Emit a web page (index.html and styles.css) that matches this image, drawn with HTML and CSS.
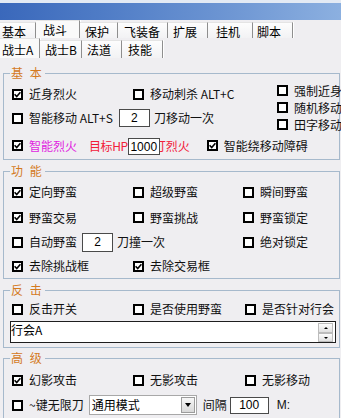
FILE: index.html
```html
<!DOCTYPE html>
<html lang="zh-CN">
<head>
<meta charset="utf-8">
<title>战斗</title>
<link rel="stylesheet" href="styles.css">
</head>
<body>
<div class="titlebar"></div>
<div class="tabs tabs1">
  <span class="tab w36 p2">基本</span>
  <span class="tab sel w44 p7">战斗</span>
  <span class="tab w38 p5">保护</span>
  <span class="tab w50 p6">飞装备</span>
  <span class="tab w40 p5">扩展</span>
  <span class="tab w45 p8">挂机</span>
  <span class="tab w40 p4">脚本</span>
</div>
<div class="tabs tabs2">
  <span class="tab sel w40 p2">战士A</span>
  <span class="tab w42 p5">战士B</span>
  <span class="tab w40 p5">法道</span>
  <span class="tab w41 p6">技能</span>
</div>
<div class="panel">
  <fieldset class="grp g1">
    <legend>基 本</legend>
    <div class="g1top">
      <div class="g1left">
        <div class="row h24">
          <span class="it c1"><i class="cb"><svg width="7" height="7" viewBox="0 0 7 7"><path d="M0.6 3.3 L2.7 5.5 L6.4 1.2"/></svg></i>近身烈火</span>
          <span class="it"><i class="cb"></i>移动刺杀 ALT+C</span>
        </div>
        <div class="row h24">
          <span class="it"><i class="cb"></i>智能移动 ALT+S</span>
          <span class="num n2a">2</span>
          <span class="tx">刀移动一次</span>
        </div>
      </div>
      <div class="g1right">
        <span class="it h17"><i class="cb"></i>强制近身</span>
        <span class="it h17"><i class="cb"></i>随机移动</span>
        <span class="it h17"><i class="cb"></i>田字移动</span>
      </div>
    </div>
    <div class="row h25">
      <span class="it"><i class="cb"><svg width="7" height="7" viewBox="0 0 7 7"><path d="M0.6 3.3 L2.7 5.5 L6.4 1.2"/></svg></i><span class="mag">智能烈火</span></span>
      <span class="red hp">目标HP</span>
      <span class="num n1000">1000</span>
      <span class="red clip"><span>打</span></span><span class="red tx">烈火</span>
      <span class="it ml17"><i class="cb"><svg width="7" height="7" viewBox="0 0 7 7"><path d="M0.6 3.3 L2.7 5.5 L6.4 1.2"/></svg></i>智能绕移动障碍</span>
    </div>
  </fieldset>

  <fieldset class="grp g2">
    <legend>功 能</legend>
    <div class="row h26">
      <span class="it c1"><i class="cb"><svg width="7" height="7" viewBox="0 0 7 7"><path d="M0.6 3.3 L2.7 5.5 L6.4 1.2"/></svg></i>定向野蛮</span>
      <span class="it c2a"><i class="cb"></i>超级野蛮</span>
      <span class="it"><i class="cb"></i>瞬间野蛮</span>
    </div>
    <div class="row h25">
      <span class="it c1"><i class="cb"><svg width="7" height="7" viewBox="0 0 7 7"><path d="M0.6 3.3 L2.7 5.5 L6.4 1.2"/></svg></i>野蛮交易</span>
      <span class="it c2a"><i class="cb"></i>野蛮挑战</span>
      <span class="it"><i class="cb"></i>野蛮锁定</span>
    </div>
    <div class="row h24">
      <span class="it c12">
        <span class="it"><i class="cb"></i>自动野蛮</span>
        <span class="num n2b">2</span>
        <span class="tx">刀撞一次</span>
      </span>
      <span class="it"><i class="cb"></i>绝对锁定</span>
    </div>
    <div class="row h24">
      <span class="it c1"><i class="cb"><svg width="7" height="7" viewBox="0 0 7 7"><path d="M0.6 3.3 L2.7 5.5 L6.4 1.2"/></svg></i>去除挑战框</span>
      <span class="it"><i class="cb"><svg width="7" height="7" viewBox="0 0 7 7"><path d="M0.6 3.3 L2.7 5.5 L6.4 1.2"/></svg></i>去除交易框</span>
    </div>
  </fieldset>

  <fieldset class="grp g3">
    <legend>反 击</legend>
    <div class="row h22">
      <span class="it c1"><i class="cb"></i>反击开关</span>
      <span class="it c2b"><i class="cb"></i>是否使用野蛮</span>
      <span class="it"><i class="cb"></i>是否针对行会</span>
    </div>
    <div class="tbox">
      <span class="tv">行会A</span>
      <span class="spin">
        <span class="sb up"></span>
        <span class="sb down"></span>
      </span>
    </div>
  </fieldset>

  <fieldset class="grp g4">
    <legend>高 级</legend>
    <div class="row h28">
      <span class="it c1"><i class="cb"><svg width="7" height="7" viewBox="0 0 7 7"><path d="M0.6 3.3 L2.7 5.5 L6.4 1.2"/></svg></i>幻影攻击</span>
      <span class="it c2b"><i class="cb"></i>无影攻击</span>
      <span class="it"><i class="cb"></i>无影移动</span>
    </div>
    <div class="row h22">
      <span class="it"><i class="cb"></i>~键无限刀</span>
      <span class="select"><span class="sv">通用模式</span><span class="dd"></span></span>
      <span class="tx gap6">间隔</span>
      <span class="num n100">100</span>
      <span class="tx lat">M:</span>
    </div>
  </fieldset>
</div>
</body>
</html>
```

FILE: styles.css
```css
* { box-sizing: border-box; }
html, body { margin: 0; padding: 0; }
body {
  width: 341px;
  height: 418px;
  overflow: hidden;
  background: #efeef1;
  font-family: "Noto Sans CJK SC", "Liberation Sans", sans-serif;
  font-size: 12px;
  line-height: 14px;
  color: #111;
}

/* title bar */
.titlebar {
  height: 20px;
  border-top: 3px solid #e3eaf4;
  background: linear-gradient(90deg, #3a68bb 0%, #4f7cc6 30%, #7098d4 70%, #8cb0e0 100%);
}

/* tabs */
.tabs { display: flex; align-items: flex-end; }
.tabs1 { height: 18px; }
.tabs2 { height: 20px; }
.tab {
  flex: none;
  display: block;
  white-space: nowrap;
  background: linear-gradient(#fdfdfd, #f2f2f4);
  border-top: 1px solid #e4e4e4;
  border-right: 1px solid #8e8e8e;
  box-shadow: 1px 0 0 #ffffff;
  line-height: 14px;
  color: #000;
}
.tabs1 .tab { height: 16px; padding-top: 2px; }
.tabs1 .tab.sel { height: 18px; padding-top: 2px; }
.tabs2 .tab { height: 18px; padding-top: 2px; }
.tabs2 .tab.sel { height: 20px; padding-top: 4px; }
.tab.sel { background: #fafafa; }
.w36 { width: 36px; }
.w38 { width: 38px; }
.w40 { width: 40px; }
.w41 { width: 41px; }
.w42 { width: 42px; }
.w44 { width: 44px; }
.w45 { width: 45px; }
.w50 { width: 50px; }
.p2 { padding-left: 2px; }
.p4 { padding-left: 4px; }
.p5 { padding-left: 5px; }
.p6 { padding-left: 6px; }
.p7 { padding-left: 7px; }
.p8 { padding-left: 8px; }

/* panel & groups */
.panel { padding: 8px 1px 0 3px; }
.grp {
  margin: 0;
  min-width: 0;
  border: 1px solid #a6b9cc;
  padding: 0 0 0 8px;
}
.grp legend {
  padding: 0 1px;
  margin-left: -2px;
  color: #d47a1e;
  line-height: 14px;
  font-size: 12px;
  letter-spacing: 2px;
}
.g1 { padding-top: 2px; padding-bottom: 1px; }
.g2 { margin-top: 4px; padding-top: 1px; padding-bottom: 0; }
.g3 { margin-top: 4px; padding-top: 1px; padding-bottom: 4px; }
.g4 { margin-top: 3px; padding-top: 1px; padding-bottom: 4px; }

.g1top { display: flex; }
.g1left { width: 265px; flex: none; }
.g1right { width: 80px; flex: none; display: flex; flex-direction: column; }

.row { display: flex; align-items: center; white-space: nowrap; }
.h17 { height: 17px; }
.h22 { height: 22px; }
.h24 { height: 24px; }
.h25 { height: 25px; }
.h26 { height: 26px; }
.h28 { height: 28px; }

.it { display: flex; align-items: center; flex: none; white-space: nowrap; }
.c1 { width: 121px; }
.c2a { width: 110px; }
.c2b { width: 112px; }
.c12 { width: 231px; }
.tx { flex: none; }

/* checkbox */
.cb {
  flex: none;
  width: 11px;
  height: 11px;
  border: 2px solid #000;
  background: #fff;
  margin-right: 6px;
  display: flex;
  align-items: center;
  justify-content: center;
}
.cb svg { display: block; }
.cb path { fill: none; stroke: #000; stroke-width: 1.6; }

/* number edits */
.num {
  flex: none;
  display: flex;
  align-items: center;
  justify-content: center;
  background: #fff;
  border: 1px solid #4a4a4a;
  font-family: "Liberation Sans", sans-serif;
  font-size: 12px;
  color: #000;
}
.n2a { width: 31px; height: 18px; margin: 0 4px 0 6px; }
.n2b { width: 31px; height: 19px; margin: 0 4px 0 5px; }
.n1000 { width: 32px; height: 17px; margin-top: 2px; }
.n100 { width: 39px; height: 17px; margin-left: 3px; }

.mag { color: #e01ee0; }
.red { color: #f2203a; }
.hp { margin-left: 12px; flex: none; letter-spacing: -0.4px; }
.clip {
  flex: none;
  width: 6px;
  overflow: hidden;
  display: flex;
  justify-content: flex-end;
}
.clip span { flex: none; }
.ml17 { margin-left: 17px; }

/* text box with spinner */
.tbox {
  margin: 1px 0 0 -2px;
  width: 326px;
  height: 22px;
  border: 1px solid #1e1e1e;
  background: #fff;
  display: flex;
}
.tv { flex: 1; padding-top: 1px; line-height: 13px; color: #000; }
.spin {
  flex: none;
  width: 17px;
  display: flex;
  flex-direction: column;
  padding: 1px 2px 0 0;
}
.sb {
  display: flex;
  align-items: center;
  justify-content: center;
  background: linear-gradient(#fdfdfd, #e0e0e0);
  border: 1px solid #bcbcbc;
}
.up { height: 10px; }
.down { height: 9px; }
.up::after {
  content: "";
  border-left: 2px solid transparent;
  border-right: 2px solid transparent;
  border-bottom: 2px solid #000;
}
.down::after {
  content: "";
  border-left: 2px solid transparent;
  border-right: 2px solid transparent;
  border-top: 2px solid #000;
}

/* combo box */
.select {
  flex: none;
  width: 108px;
  height: 20px;
  margin-left: 5px;
  background: #fff;
  border: 1px solid #a8a8a8;
  display: flex;
  align-items: center;
  padding: 0 1px 0 2px;
}
.sv { flex: 1; color: #000; }
.dd {
  flex: none;
  width: 14px;
  height: 16px;
  border: 1px solid #9c9c9c;
  background: linear-gradient(#f7f7f7, #d8d8d8);
  display: flex;
  align-items: center;
  justify-content: center;
}
.dd::after {
  content: "";
  border-left: 3.5px solid transparent;
  border-right: 3.5px solid transparent;
  border-top: 4px solid #000;
}
.gap6 { margin-left: 6px; }
.lat { margin-left: 8px; font-family: "Liberation Sans", sans-serif; }
```
